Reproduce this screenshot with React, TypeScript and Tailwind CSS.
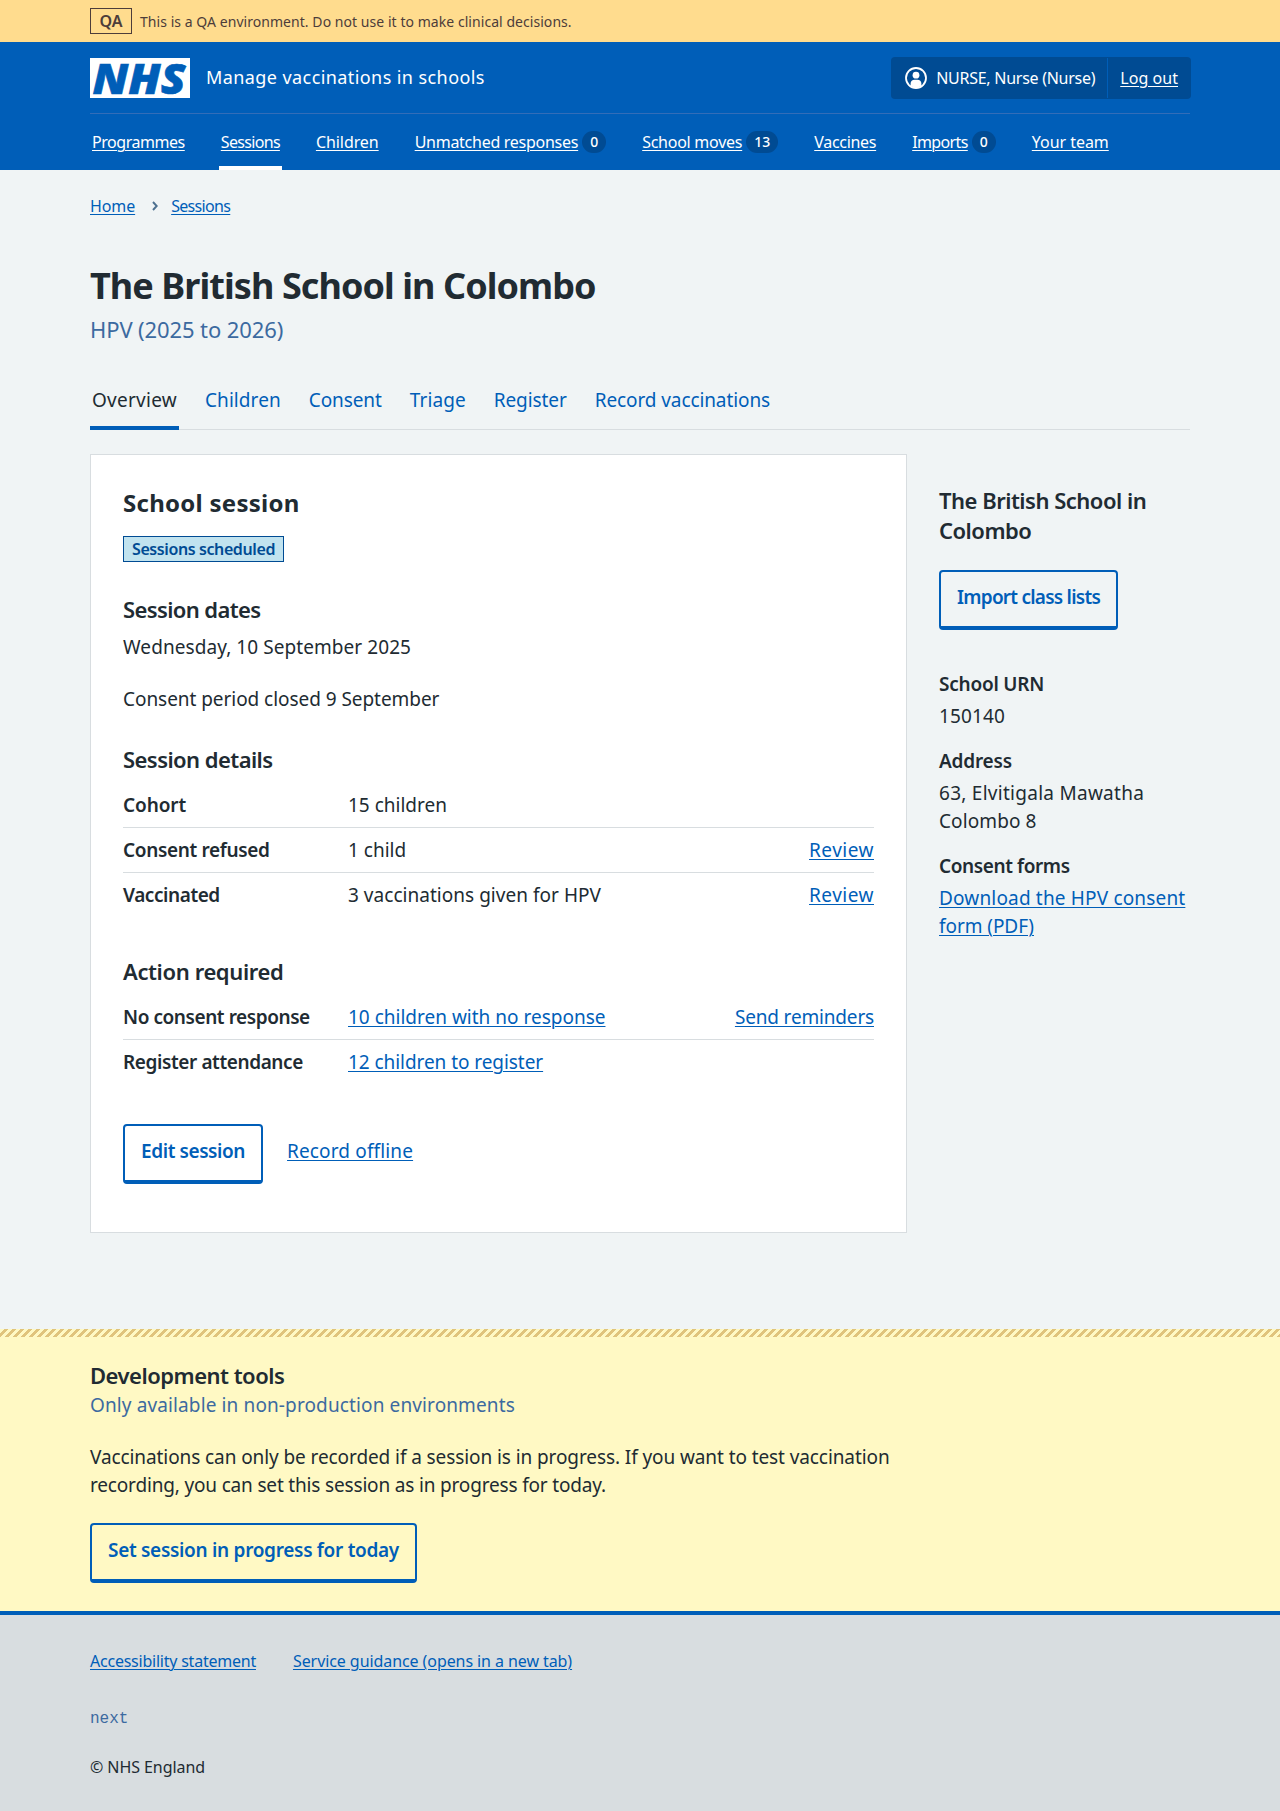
import type { ReactNode } from "react";

const link = "text-[#005eb8] underline decoration-1 underline-offset-2";

type NavEntry = { label: string; tracking: string; count?: string; current?: boolean };

const navEntries: NavEntry[] = [
  { label: "Programmes", tracking: "tracking-[-0.46px]" },
  { label: "Sessions", tracking: "tracking-[-0.67px]", current: true },
  { label: "Children", tracking: "tracking-[-0.07px]" },
  { label: "Unmatched responses", tracking: "tracking-[-0.27px]", count: "0" },
  { label: "School moves", tracking: "tracking-[-0.26px]", count: "13" },
  { label: "Vaccines", tracking: "tracking-[-0.3px]" },
  { label: "Imports", tracking: "tracking-[-0.62px]", count: "0" },
  { label: "Your team", tracking: "tracking-[-0.04px]" },
];

const tabs = [
  { label: "Overview", tracking: "tracking-[0.26px]", current: true },
  { label: "Children", tracking: "tracking-[0.08px]" },
  { label: "Consent", tracking: "tracking-[-0.1px]" },
  { label: "Triage", tracking: "tracking-[0.09px]" },
  { label: "Register", tracking: "tracking-[-0.08px]" },
  { label: "Record vaccinations", tracking: "tracking-[-0.1px]" },
];

function NhsLogo() {
  return (
    <svg width="100" height="40" viewBox="0 0 100 40" aria-label="NHS" className="block overflow-visible bg-white">
      <text
        x="2.5"
        y="35.5"
        textLength="93"
        lengthAdjust="spacingAndGlyphs"
        fill="#005eb8"
        stroke="#005eb8"
        strokeWidth="0.6"
        className="font-['Open_Sans'] text-[43px] font-extrabold italic"
      >
        NHS
      </text>
    </svg>
  );
}

function AccountIcon() {
  return (
    <svg width="22" height="22" viewBox="0 0 22 22" aria-hidden="true" className="block">
      <circle cx="11" cy="11" r="10" fill="none" stroke="#fff" strokeWidth="1.800" />
      <circle cx="11" cy="8.2" r="3.400" fill="#fff" />
      <path
        d="M5.6 18.6v-1.8c0-2.400 1.700-4 4-4h2.8c2.300 0 4 1.600 4 4v1.800c-1.500 1.400-3.300 2.200-5.400 2.200s-3.900-.8-5.400-2.200z"
        fill="#fff"
      />
    </svg>
  );
}

function SecondaryButton({ children }: { children: ReactNode }) {
  return (
    <button
      type="button"
      className="block h-[60px] rounded-[4px] border-2 border-b-4 border-[#005eb8] px-4 pt-[11px] pb-[15px] text-[19px] leading-7 font-semibold whitespace-nowrap text-[#005eb8]"
    >
      {children}
    </button>
  );
}

function SummaryRow({
  label,
  value,
  action,
  last,
}: {
  label: ReactNode;
  value: ReactNode;
  action?: ReactNode;
  last?: boolean;
}) {
  return (
    <div className={last ? "flex py-2" : "flex border-b border-[#d8dde0] py-2"}>
      <dt className="w-[225px] shrink-0 font-semibold">{label}</dt>
      <dd className="grow">{value}</dd>
      {action && <dd>{action}</dd>}
    </div>
  );
}

export default function App() {
  return (
    <div className="min-h-[1811px] bg-[#f0f4f5] font-['Noto_Sans',sans-serif] text-[19px] leading-7 text-[#212b32]">
      <div className="h-[42px] bg-[#ffdc8e] text-[#4d3d3a]">
        <div className="mx-auto flex h-full w-[1100px] items-center gap-2">
          <strong className="flex h-[26px] w-[42px] items-center justify-center border border-[#4d3d3a] text-base leading-6 font-semibold">
            QA
          </strong>
          <span className="pt-0.5 text-sm leading-5 tracking-[0.05px]">
            This is a QA environment. Do not use it to make clinical decisions.
          </span>
        </div>
      </div>

      <header className="h-32 bg-[#005eb8] text-white">
        <div className="mx-auto w-[1100px]">
          <div className="flex h-[72px] items-center border-b border-[#336db8]">
            <NhsLogo />
            <span className="mb-0.5 ml-4 text-lg leading-7 tracking-[0.42px]">Manage vaccinations in schools</span>
            <div className="-mr-px ml-auto flex h-[42px] items-center rounded-[4px] bg-[#004b93] text-base leading-6">
              <div className="flex h-10 items-center border-r border-[#005eb8] pr-3 pl-3.5">
                <AccountIcon />
                <span className="ml-[9px] tracking-[-0.27px]">NURSE, Nurse (Nurse)</span>
              </div>
              <a className="pr-[13px] pl-3 tracking-[0.05px] underline decoration-1 underline-offset-2">Log out</a>
            </div>
          </div>
          <nav className="flex h-14 gap-8 text-base leading-6">
            {navEntries.map((e) => (
              <a
                key={e.label}
                className={
                  e.current
                    ? "flex items-center border-b-4 border-white px-0.5 pt-1"
                    : "flex items-center px-0.5"
                }
              >
                <span className={`${e.tracking} underline decoration-1 underline-offset-2`}>{e.label}</span>
                {e.count && (
                  <span className="ml-1 flex h-[22px] items-center rounded-full bg-[#004b93] px-2 text-sm font-medium">
                    {e.count}
                  </span>
                )}
              </a>
            ))}
          </nav>
        </div>
      </header>

      <main className="mx-auto h-[1159px] w-[1100px] pt-6">
        <nav className="flex h-6 items-center text-base leading-6">
          <a className={`${link} tracking-[-0.1px]`}>Home</a>
          <svg width="6" height="10" viewBox="0 0 6 10" className="mr-[13.500px] ml-[16.500px]" aria-hidden="true">
            <path d="M1 1l3.700 4L1 9" fill="none" stroke="#4c6f8f" strokeWidth="1.900" />
          </svg>
          <a className={`${link} tracking-[-0.67px]`}>Sessions</a>
        </nav>

        <h1 className="mt-[45px] text-4xl leading-[45px] font-bold tracking-[-0.93px]">
          The British School in Colombo
        </h1>
        <p className="mt-[5px] text-[22px] leading-8 tracking-[-0.11px] text-[#3c6aa0]">HPV (2025 to 2026)</p>

        <nav className="mt-10 flex h-[45px] gap-6 shadow-[inset_0_-1px_0_#d8dde0]">
          {tabs.map((t) => (
            <a
              key={t.label}
              className={
                t.current
                  ? "border-b-4 border-[#005eb8] px-0.5 pt-px text-[#212b32]"
                  : "px-0.5 pt-px text-[#005eb8]"
              }
            >
              <span className={t.tracking}>{t.label}</span>
            </a>
          ))}
        </nav>

        <div className="mt-6 flex items-start">
          <section className="h-[779px] w-[817px] border border-[#d8dde0] bg-white px-8 pt-8">
            <h2 className="text-2xl leading-8 font-bold tracking-[0.27px]">School session</h2>
            <strong className="mt-[17px] flex h-[26px] w-[161px] items-center justify-center border border-[#004b93] bg-[#c1e3ef] text-base leading-6 font-semibold tracking-[-0.4px] text-[#004b93]">
              Sessions scheduled
            </strong>

            <h3 className="mt-8 text-[22px] leading-[30px] font-semibold tracking-[-0.62px]">Session dates</h3>
            <p className="mt-[9px] tracking-[0.07px]">Wednesday, 10 September 2025</p>
            <p className="mt-6 tracking-[-0.05px]">Consent period closed 9 September</p>

            <h3 className="mt-[31px] text-[22px] leading-[30px] font-semibold tracking-[-0.56px]">Session details</h3>
            <dl className="mt-[9px]">
              <SummaryRow label={<span className="tracking-[-0.11px]">Cohort</span>} value="15 children" />
              <SummaryRow
                label={<span className="tracking-[-0.34px]">Consent refused</span>}
                value="1 child"
                action={<a className={`${link} tracking-[0.5px]`}>Review</a>}
              />
              <SummaryRow
                label={<span className="tracking-[-0.43px]">Vaccinated</span>}
                value={<span className="tracking-[0.03px]">3 vaccinations given for HPV</span>}
                action={<a className={`${link} tracking-[0.5px]`}>Review</a>}
                last
              />
            </dl>

            <h3 className="mt-[39px] text-[22px] leading-[30px] font-semibold tracking-[-0.38px]">Action required</h3>
            <dl className="mt-[9px]">
              <SummaryRow
                label={<span className="tracking-[-0.43px]">No consent response</span>}
                value={<a className={link}>10 children with no response</a>}
                action={<a className={`${link} tracking-[-0.17px]`}>Send reminders</a>}
              />
              <SummaryRow
                label={<span className="tracking-[-0.4px]">Register attendance</span>}
                value={<a className={`${link} tracking-[-0.06px]`}>12 children to register</a>}
                last
              />
            </dl>

            <div className="mt-10 flex gap-6">
              <SecondaryButton>
                <span className="tracking-[-0.41px]">Edit session</span>
              </SecondaryButton>
              <a className={`${link} mt-[13px] tracking-[0.14px]`}>Record offline</a>
            </div>
          </section>

          <aside className="ml-8 w-[251px] pt-[31px]">
            <h2 className="text-[22px] leading-[30px] font-semibold tracking-[-0.5px]">
              The British School in Colombo
            </h2>
            <div className="mt-[25px]">
              <SecondaryButton>
                <span className="tracking-[-0.76px]">Import class lists</span>
              </SecondaryButton>
            </div>
            <dl className="mt-10">
              <dt className="font-semibold tracking-[-0.23px]">School URN</dt>
              <dd className="mt-1 tracking-[0.13px]">150140</dd>
              <dt className="mt-[17px] font-semibold tracking-[-0.2px]">Address</dt>
              <dd className="mt-1">
                <span className="tracking-[0.27px]">63, Elvitigala Mawatha</span>
                <br />
                <span className="tracking-[0.1px]">Colombo 8</span>
              </dd>
              <dt className="mt-[17px] font-semibold tracking-[-0.4px]">Consent forms</dt>
              <dd className="mt-1">
                <a className={link}>
                  <span className="tracking-[0.17px]">Download the HPV consent</span>
                  <br />
                  <span className="tracking-[-0.06px]">form (PDF)</span>
                </a>
              </dd>
            </dl>
          </aside>
        </div>
      </main>

      <section className="h-[282px] bg-[#fff9c4]">
        <div className="h-2 bg-[linear-gradient(135deg,#fff9c4_25%,#e0c47c_25%_50%,#fff9c4_50%_75%,#e0c47c_75%)] bg-size-[8px_8px]" />
        <div className="mx-auto w-[1100px] pt-[23px]">
          <h2 className="text-[22px] leading-[30px] font-semibold tracking-[-0.5px]">Development tools</h2>
          <p className="mt-px tracking-[0.12px] text-[#3c6aa0]">Only available in non-production environments</p>
          <p className="mt-6 whitespace-nowrap">
            <span className="tracking-[-0.09px]">
              Vaccinations can only be recorded if a session is in progress. If you want to test vaccination
            </span>
            <br />
            <span className="tracking-[-0.17px]">recording, you can set this session as in progress for today.</span>
          </p>
          <div className="mt-6">
            <SecondaryButton>
              <span className="tracking-[-0.3px]">Set session in progress for today</span>
            </SecondaryButton>
          </div>
        </div>
      </section>

      <footer className="h-[200px] border-t-4 border-[#005eb8] bg-[#d8dde0]">
        <div className="mx-auto w-[1100px] pt-[34px] text-base leading-6">
          <div className="flex gap-[37px]">
            <a className={`${link} tracking-[-0.23px]`}>Accessibility statement</a>
            <a className={`${link} tracking-[-0.08px]`}>Service guidance (opens in a new tab)</a>
          </div>
          <p className="mt-[34px] font-['Liberation_Mono',monospace] text-[#3c6aa0]">next</p>
          <p className="mt-6 tracking-[-0.07px]">© NHS England</p>
        </div>
      </footer>
    </div>
  );
}
